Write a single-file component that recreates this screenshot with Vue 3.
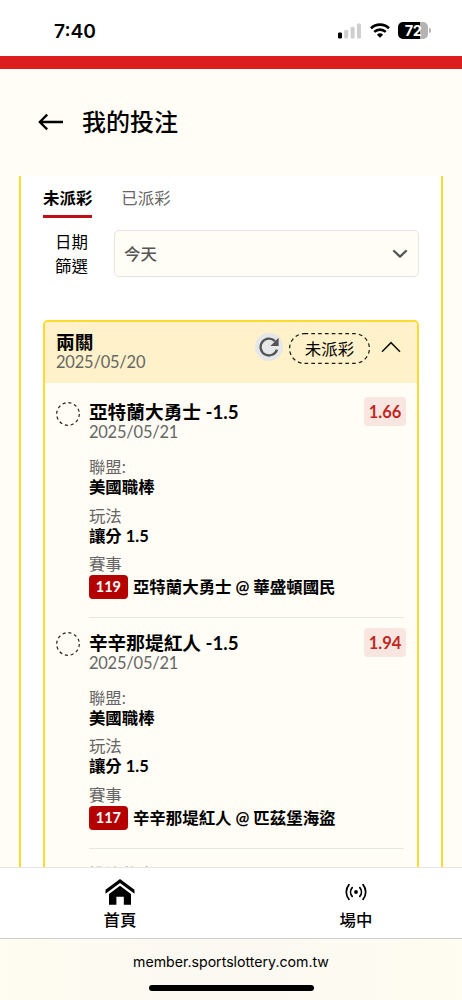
<template>
  <div class="app">
    <div class="status-bar">
      <span class="clock">7:40</span>
      <div class="status-icons">
        <svg class="signal" width="24" height="16" viewBox="0 0 24 16">
          <rect x="0" y="9.5" width="4" height="6" rx="1.2" fill="#000" />
          <rect x="6.2" y="7" width="4" height="8.5" rx="1.2" fill="#cfcfcf" />
          <rect x="12.6" y="3.8" width="4" height="11.7" rx="1.2" fill="#cfcfcf" />
          <rect x="19" y="0.5" width="4" height="15" rx="1.2" fill="#cfcfcf" />
        </svg>
        <svg class="wifi" width="20" height="15" viewBox="0 0 20 15">
          <path d="M1 5.2a13 13 0 0 1 18 0" fill="none" stroke="#000" stroke-width="2.7" />
          <path d="M4.3 8.9a8.2 8.2 0 0 1 11.4 0" fill="none" stroke="#000" stroke-width="2.6" />
          <path d="M10 14.8l-3.1-3.1a4.5 4.5 0 0 1 6.2 0z" fill="#000" />
        </svg>
        <div class="battery"><span>72</span></div>
        <div class="battery-tip"></div>
      </div>
    </div>

    <div class="red-bar"></div>

    <header class="page-header">
      <svg width="26" height="18" viewBox="0 0 26 18">
        <path d="M25 9H2M9.2 1.6L1.8 9l7.4 7.4" fill="none" stroke="#000" stroke-width="2.3" />
      </svg>
      <h1>我的投注</h1>
    </header>

    <main class="content">
      <section class="panel">
        <div class="tabs">
          <span
            v-for="tab in tabs"
            :key="tab"
            :class="['tab', { active: tab === activeTab }]"
          >{{ tab }}</span>
        </div>

        <div class="filter">
          <label>日期<br />篩選</label>
          <div class="select">
            <span>今天</span>
            <svg width="16" height="10" viewBox="0 0 16 10">
              <path d="M2 2l6 5.6L14 2" fill="none" stroke="#555" stroke-width="2.3" stroke-linecap="round" stroke-linejoin="round" />
            </svg>
          </div>
        </div>

        <article class="ticket">
          <div class="ticket-head">
            <div class="ticket-info">
              <div class="ticket-title">兩關</div>
              <div class="date">2025/05/20</div>
            </div>
            <div class="refresh">
              <svg width="20" height="20" viewBox="0 0 20 20">
                <path d="M16 4.1A8.4 8.4 0 1 0 18 12.6" fill="none" stroke="#555" stroke-width="2.4" />
                <path d="M19.6 0.8v8.2h-8.2z" fill="#555" />
              </svg>
            </div>
            <div class="pill">
              <svg width="81" height="31" viewBox="0 0 81 31">
                <rect x="0.6" y="0.6" width="79.8" height="29.8" rx="14.9" fill="none" stroke="#1c1a12" stroke-width="1.2" stroke-dasharray="3.7 3.1" />
              </svg>
              <span>未派彩</span>
            </div>
            <svg class="chevron-up" width="20" height="12" viewBox="0 0 20 12">
              <path d="M1 10.7L10 1.6l9 9.1" fill="none" stroke="#111" stroke-width="1.5" />
            </svg>
          </div>

          <div class="ticket-body">
            <div v-for="leg in legs" :key="leg.no" class="leg">
              <svg class="leg-status" width="24" height="24" viewBox="0 0 24 24">
                <circle cx="12" cy="12" r="11.3" fill="none" stroke="#222" stroke-width="1.2" stroke-dasharray="3.1 2.82" />
              </svg>
              <div class="leg-main">
                <div class="leg-top">
                  <div>
                    <div class="leg-title">{{ leg.pick }}</div>
                    <div class="date">{{ leg.date }}</div>
                  </div>
                  <span class="odds">{{ leg.odds }}</span>
                </div>
                <dl>
                  <dt>聯盟:</dt>
                  <dd>{{ leg.league }}</dd>
                  <dt>玩法</dt>
                  <dd>{{ leg.market }}</dd>
                  <dt>賽事</dt>
                  <dd class="match"><span class="no">{{ leg.no }}</span>{{ leg.match }}</dd>
                </dl>
              </div>
            </div>
            <div class="summary">投注截止:</div>
          </div>
        </article>
      </section>
    </main>

    <nav class="bottom-nav">
      <a>
        <svg width="30" height="28" viewBox="0 0 30 28">
          <path d="M15 1L29.5 11.8v4L15 5.1 0.5 15.8v-4z" fill="#000" />
          <path d="M15 7.8L26 16v10.8h-7.2v-8h-7.4v8H4V16z" fill="#000" />
        </svg>
        <span>首頁</span>
      </a>
      <a>
        <svg width="24" height="28" viewBox="0 0 24 28">
          <g fill="none" stroke="#000" stroke-width="1.7" stroke-linecap="round">
            <path d="M5 6.6a11.5 11.5 0 0 0 0 14.8" />
            <path d="M8.2 9.6a6.8 6.8 0 0 0 0 8.8" />
            <path d="M15.8 9.6a6.8 6.8 0 0 1 0 8.8" />
            <path d="M19 6.6a11.5 11.5 0 0 1 0 14.8" />
          </g>
          <circle cx="12" cy="14" r="1.9" fill="#000" />
        </svg>
        <span>場中</span>
      </a>
    </nav>

    <footer class="browser-bar">
      <span>member.sportslottery.com.tw</span>
      <div class="home-indicator"></div>
    </footer>
  </div>
</template>

<script setup>
import { ref } from 'vue';

const tabs = ['未派彩', '已派彩'];
const activeTab = ref('未派彩');

const legs = [
  {
    no: 119,
    pick: '亞特蘭大勇士 -1.5',
    date: '2025/05/21',
    odds: '1.66',
    league: '美國職棒',
    market: '讓分 1.5',
    match: '亞特蘭大勇士 @ 華盛頓國民'
  },
  {
    no: 117,
    pick: '辛辛那堤紅人 -1.5',
    date: '2025/05/21',
    odds: '1.94',
    league: '美國職棒',
    market: '讓分 1.5',
    match: '辛辛那堤紅人 @ 匹茲堡海盜'
  }
];
</script>

<style scoped>
.app {
  display: flex;
  flex-direction: column;
  height: 1000px;
  overflow: hidden;
  background: #fffdf5;
  color: #000;
  font-family: Lato, 'Noto Sans CJK TC', sans-serif;
  font-size: 16.45px;
}

.status-bar {
  flex: none;
  height: 55.5px;
  padding: 6px 31px 0 54px;
  box-sizing: border-box;
  display: flex;
  align-items: center;
  justify-content: space-between;
  background: #fff;
}

.clock {
  font-family: Inter, sans-serif;
  font-size: 19.2px;
  font-weight: 600;
}

.status-icons {
  display: flex;
  align-items: center;
}

.wifi {
  margin: 0 8px 0 8px;
}

.battery {
  width: 30px;
  height: 17px;
  border-radius: 5px;
  background: linear-gradient(to right, #000 73%, #b3b3b3 73%);
  color: #fff;
  font: 700 14.5px/17px Inter, sans-serif;
  text-align: center;
  letter-spacing: -0.5px;
}

.battery-tip {
  width: 2px;
  height: 5px;
  margin-left: 1px;
  border-radius: 0 2px 2px 0;
  background: #b3b3b3;
}

.red-bar {
  flex: none;
  height: 13.5px;
  background: #dc1e1e;
}

.page-header {
  flex: none;
  height: 106.5px;
  padding: 0 0 0 38px;
  box-sizing: border-box;
  display: flex;
  align-items: center;
  gap: 18px;
}

.page-header h1 {
  margin: 0;
  font-size: 24px;
  line-height: 30px;
  font-weight: 500;
}

.content {
  flex: 1;
  min-height: 0;
  overflow: hidden;
  padding: 0 19px;
}

.panel {
  height: 800px;
  padding: 8.5px 22px 0;
  background: #fff;
  border: solid #ffd92e;
  border-width: 0 2.5px;
}

.tabs {
  display: flex;
  gap: 29px;
}

.tab {
  height: 31px;
  line-height: 29px;
  border-bottom: 3px solid transparent;
  color: #666;
}

.tab.active {
  color: #000;
  font-weight: 700;
  border-color: #c10d14;
}

.filter {
  display: flex;
  margin-top: 12px;
}

.filter label {
  width: 71px;
  padding: 1px 0 0 12px;
  box-sizing: border-box;
  line-height: 23.5px;
}

.select {
  flex: 1;
  height: 47px;
  padding: 0 10px 0 9px;
  box-sizing: border-box;
  display: flex;
  align-items: center;
  justify-content: space-between;
  border: 1px solid #e8e4df;
  border-radius: 5px;
  background: #fffdf5;
  color: #555;
  font-weight: 500;
}

.select span {
  padding-bottom: 2px;
}

.ticket {
  margin-top: 42.3px;
  height: 700px;
  border: 2px solid #ffd92e;
  border-radius: 5px;
  background: #fffdf5;
  overflow: hidden;
}

.ticket-head {
  height: 60.5px;
  padding: 0 16px 0 11px;
  box-sizing: border-box;
  display: flex;
  background: #fff1c9;
}

.ticket-info {
  flex: 1;
  padding-top: 9.5px;
}

.ticket-title,
.leg-title {
  font-size: 18.7px;
  line-height: 20px;
  font-weight: 700;
}

.date {
  color: #666;
  line-height: 20px;
  letter-spacing: -0.18px;
}

.refresh {
  width: 28px;
  height: 28px;
  margin: 11px 6px 0 0;
  display: flex;
  align-items: center;
  justify-content: center;
  border-radius: 50%;
  background: #e6e7e9;
}

.pill {
  display: grid;
  place-items: center;
  width: 81px;
  height: 31px;
  margin: 11px 11px 0 0;
}

.pill > * {
  grid-area: 1 / 1;
}

.pill span {
  padding-bottom: 1px;
}

.chevron-up {
  margin-top: 19px;
}

.ticket-body {
  padding: 5px 13px 0 10.5px;
}

.leg {
  display: flex;
}

.leg-status {
  flex: none;
  margin: 14px 9.4px 0 0;
}

.leg-main {
  flex: 1;
  height: 230.6px;
  padding-top: 14.5px;
  box-sizing: border-box;
  border-bottom: 1.5px solid #e9e5e0;
}

.leg-top {
  display: flex;
  justify-content: space-between;
}

.odds {
  width: 42px;
  height: 29px;
  margin: -5px -2px 0 0;
  border-radius: 4px;
  background: #f9e6e1;
  color: #c0271f;
  font-size: 16.5px;
  line-height: 30px;
  font-weight: 700;
  text-align: center;
}

dl {
  margin: 16px 0 0;
}

dt {
  line-height: 19px;
  color: #666;
}

dd {
  margin: 0 0 9.5px;
  line-height: 20px;
  font-weight: 700;
}

.match {
  display: flex;
  align-items: center;
  line-height: 26px;
}

.no {
  width: 39px;
  height: 24px;
  margin-right: 5px;
  border-radius: 4px;
  background: #b50000;
  color: #fff;
  font-size: 14.5px;
  line-height: 24px;
  text-align: center;
}

.summary {
  margin: 15px 0 0 33px;
  line-height: 20px;
  color: #888;
}

.bottom-nav {
  flex: none;
  height: 71.5px;
  box-sizing: border-box;
  display: flex;
  border-top: 1px solid #e6e6e6;
  border-bottom: 1px solid #cfcfcf;
  background: #fff;
}

.bottom-nav a {
  flex: 1 1 0;
  display: flex;
  flex-direction: column;
  align-items: center;
  padding-top: 10px;
}

.bottom-nav a:first-child {
  padding-left: 14px;
}

.bottom-nav a:last-child {
  padding-left: 24px;
}

.bottom-nav span {
  margin-top: 2px;
  line-height: 24px;
  font-weight: 500;
}

.browser-bar {
  flex: none;
  height: 61.5px;
  display: flex;
  flex-direction: column;
  align-items: center;
  background: linear-gradient(to right, #fffdf1, #fbf9f1 35%, #fbf9f1 60%, #fffdf1);
  font: 14.15px/20px Inter, sans-serif;
}

.browser-bar span {
  margin-top: 13px;
}

.home-indicator {
  width: 165px;
  height: 6px;
  margin-top: 13px;
  border-radius: 3px;
  background: #000;
}
</style>

<style>
body {
  margin: 0;
}
</style>
